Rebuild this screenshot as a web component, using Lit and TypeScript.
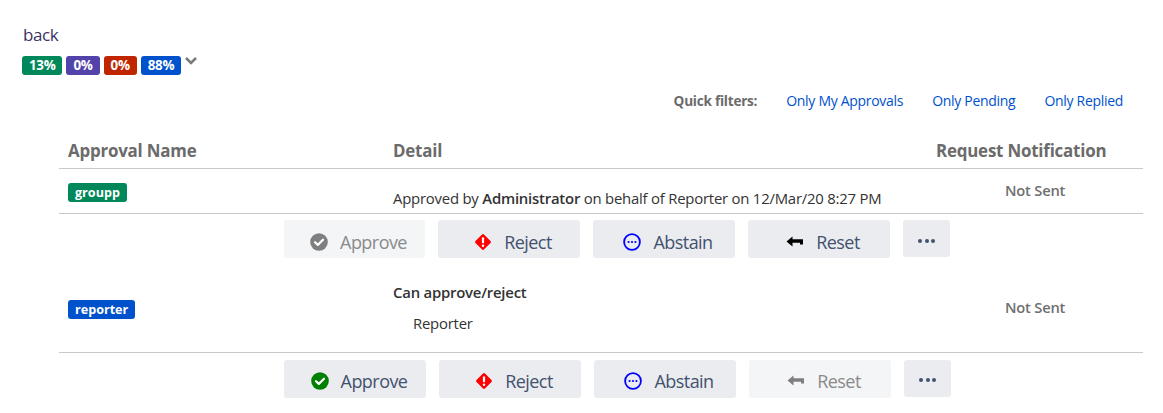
import { LitElement, html, css, svg } from "lit";
import { customElement } from "lit/decorators.js";

const icons = {
  check: (bg: string) => svg`<circle cx="9" cy="9" r="8.8" fill="${bg}"/><path d="M5 9.2l2.8 2.7 5.2-5.2" fill="none" stroke="#fff" stroke-width="2.2" stroke-linecap="round" stroke-linejoin="round"/>`,
  reject: svg`<rect x="3" y="3" width="12" height="12" rx="1.4" fill="#f00" transform="rotate(45 9 9)"/><rect x="7.9" y="4.2" width="2.2" height="6.2" rx="1.1" fill="#fff"/><circle cx="9" cy="12.8" r="1.25" fill="#fff"/>`,
  abstain: svg`<circle cx="9" cy="9" r="7.9" fill="none" stroke="#00f" stroke-width="1.8"/><circle cx="5.6" cy="9" r="1.1" fill="#00f"/><circle cx="9" cy="9" r="1.1" fill="#00f"/><circle cx="12.4" cy="9" r="1.1" fill="#00f"/>`,
  reset: (c: string) => svg`<path d="M0.5 8.5L6.5 3.6V6.3H17V11.6H14V9.8H6.5V13.4Z" fill="${c}"/>`,
};

const ic = (content: unknown) => html`<svg class="ic" width="18" height="18" viewBox="0 0 18 18">${content}</svg>`;

@customElement("action-bar")
class ActionBar extends LitElement {
  static properties = { pending: { type: Boolean, reflect: true } };
  pending = false;
  static styles = css`
    :host { display: flex; gap: 13px; }
    .btn {
      width: 142px; height: 38px; box-sizing: border-box; border-radius: 3px; background: #ebecf0; padding: 6px 0 0 8px;
      display: flex; align-items: center; justify-content: center; gap: 12px;
      color: #42526e; font: 18px/32px "Open Sans", "Noto Sans", sans-serif; letter-spacing: -0.55px;
    }
    :host([pending]) .btn { padding-top: 4px; }
    .btn.narrow { width: 141px; }
    .btn.off { background: #f4f5f7; color: #8a8a8a; }
    .btn.more { width: 47px; height: 37px; padding: 5px 0 0; }
    :host([pending]) .btn.more { padding: 3px 0 0; }
    .ic { flex: none; display: block; }
    .dots { display: flex; gap: 2.5px; }
    .dots i { width: 4px; height: 4px; border-radius: 50%; background: #42526e; }
  `;
  render() {
    const p = this.pending;
    return html`
      <div class="btn ${p ? "" : "off narrow"}">${ic(icons.check(p ? "#008000" : "#7f7f7f"))}<span>Approve</span></div>
      <div class="btn">${ic(icons.reject)}<span>Reject</span></div>
      <div class="btn">${ic(icons.abstain)}<span>Abstain</span></div>
      <div class="btn ${p ? "off" : ""}">${ic(icons.reset(p ? "#7f7f7f" : "#000"))}<span>Reset</span></div>
      <div class="btn more"><span class="dots"><i></i><i></i><i></i></span></div>
    `;
  }
}

@customElement("app-root")
export class AppRoot extends LitElement {
  static styles = css`
    :host { display: block; height: 413px; overflow: hidden; background: #fff; color: #333; font-family: "Open Sans", "Noto Sans", sans-serif; }
    .top { padding: 24px 0 0 22px; }
    .back { font-size: 17px; line-height: 22px; color: #3b3363; letter-spacing: -0.45px; padding-left: 1px; }
    .badges { display: flex; gap: 4px; margin-top: 10px; align-items: flex-start; }
    .pct { height: 19px; min-width: 33px; padding: 0 7px; border-radius: 3px; color: #fff; font-size: 13.4px; font-weight: 700; line-height: 19px; letter-spacing: -0.3px; box-sizing: border-box; display: flex; justify-content: center; }
    .chev { display: block; margin-left: -1px; }
    .g { background: #00875a; } .p { background: #5243aa; } .r { background: #bf2600; } .b { background: #0052cc; }
    .filters { display: flex; justify-content: flex-end; align-items: center; margin-top: 15px; padding-right: 40px; height: 20px; font-size: 14px; letter-spacing: -0.3px; color: #0052cc; gap: 29px; }
    .filters b { color: #6b6b6b; font-size: 13.6px; letter-spacing: -0.25px; }
    .table { margin: 0 20px 0 59px; }
    .row { display: grid; grid-template-columns: 334px 533px 217px; }
    .head { margin-top: 11px; border-bottom: 1px solid #c8c8c8; align-items: end; padding-bottom: 5px; box-sizing: border-box; height: 48px; font-weight: 700; font-size: 16.9px; line-height: 24px; color: #6b6b6b; letter-spacing: -0.2px; }
    .head > :first-child { padding-left: 9px; }
    .head > :last-child { padding-left: 10px; white-space: nowrap; }
    .r1 { height: 44px; border-bottom: 1px solid #c8c8c8; }
    .r2 { height: 94px; border-bottom: 1px solid #c8c8c8; }
    .lozenge { display: block; width: fit-content; color: #fff; font-size: 12.6px; font-weight: 700; height: 19px; line-height: 19px; padding: 0 7px; border-radius: 3px; }
    .name { padding-left: 9px; }
    .r1 .name { padding-top: 14px; }
    .r2 .name { padding-top: 42px; }
    .detail { font-size: 14.9px; color: #333; letter-spacing: -0.22px; }
    .r1 .detail { padding-top: 19px; line-height: 21px; }
    .r1 .detail b { font-weight: 600; }
    .r2 .detail { padding-top: 24px; line-height: 20px; }
    .r2 .detail b { font-weight: 600; display: block; }
    .r2 .detail div { margin: 11px 0 0 20px; }
    .status { font-size: 14.7px; font-weight: 600; color: #6f6f6f; letter-spacing: -0.2px; padding-left: 79px; }
    .r1 .status { padding-top: 11px; line-height: 20px; }
    .r2 .status { padding-top: 39px; line-height: 20px; }
    action-bar { margin-left: 225px; }
    .a0 { padding-top: 6px; }
    .a2 { padding-top: 7px; }
  `;
  render() {
    return html`
      <div class="top">
        <div class="back">back</div>
        <div class="badges">
          <span class="pct g">13%</span><span class="pct p">0%</span><span class="pct r">0%</span><span class="pct b">88%</span>
          <svg class="chev" width="14" height="10" viewBox="0 0 14 10"><path d="M2 2l5 5 5-5" fill="none" stroke="#7a7a7a" stroke-width="2.6"/></svg>
        </div>
      </div>
      <div class="filters"><b>Quick filters:</b><span>Only My Approvals</span><span>Only Pending</span><span>Only Replied</span></div>
      <div class="table">
        <div class="row head"><div>Approval Name</div><div>Detail</div><div>Request Notification</div></div>
        <div class="row r1">
          <div class="name"><span class="lozenge g">groupp</span></div>
          <div class="detail">Approved by <b>Administrator</b> on behalf of Reporter on 12/Mar/20 8:27 PM</div>
          <div class="status">Not Sent</div>
        </div>
        <div class="a0"><action-bar></action-bar></div>
        <div class="row r2">
          <div class="name"><span class="lozenge b">reporter</span></div>
          <div class="detail"><b>Can approve/reject</b><div>Reporter</div></div>
          <div class="status">Not Sent</div>
        </div>
        <div class="a2"><action-bar pending></action-bar></div>
      </div>
    `;
  }
}
